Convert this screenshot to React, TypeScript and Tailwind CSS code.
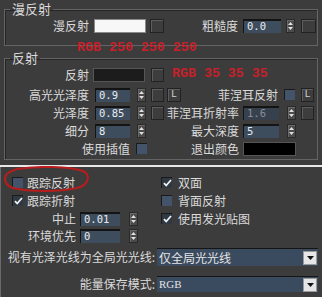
import React from 'react';

const Spinner = () => (
    <div className="w-[9px] h-[14px] bg-[#4b4b4b] border border-[#2a2a2a] shadow-[inset_1px_1px_0_#6a6a6a] flex flex-col items-center justify-center gap-[2px] shrink-0">
        <svg width="5" height="3" viewBox="0 0 5 3"><path d="M2.5 0L5 3H0z" fill="#e0e0e0" /></svg>
        <svg width="5" height="3" viewBox="0 0 5 3"><path d="M0 0h5L2.5 3z" fill="#e0e0e0" /></svg>
    </div>
);

const MapBtn = ({ className = '' }: { className?: string }) => (
    <div className={`h-[14px] border border-[#222] shadow-[inset_1px_1px_0_#5e5e5e] bg-[#3d3d3d] shrink-0 ${className}`} />
);

const LBtn = ({ className = '' }: { className?: string }) => (
    <div className={`h-[14px] border border-[#222] shadow-[inset_1px_1px_0_#5e5e5e] bg-[#3d3d3d] shrink-0 flex items-center justify-center text-[10px] leading-none text-[#d0d0d0] font-['Liberation_Mono',monospace] ${className}`}>
        L
    </div>
);

const Num = ({ v, className = '', disabled = false }: { v: string; className?: string; disabled?: boolean }) => (
    <div
        className={`h-[14px] border-t-2 border-l border-[#141414] pl-[3px] flex items-center text-[10.5px] leading-none font-['DejaVu_Sans_Mono',monospace] shrink-0 ${
            disabled ? 'bg-[#36414d] text-[#8a8f96]' : 'bg-[#3e4d5e] text-[#e8ecf0]'
        } ${className}`}
    >
        {v}
    </div>
);

const Check = ({ on = false }: { on?: boolean }) => (
    <div
        className={`w-[11px] h-[11px] shrink-0 border-t border-l border-[#1a1a1a] flex items-center justify-center ${
            on ? 'bg-[#2e3944]' : 'bg-[#43536a]'
        }`}
    >
        {on && (
            <svg width="9" height="8" viewBox="0 0 9 8">
                <path d="M1 4.2l2.2 2.3L8 1" stroke="#f2f2f2" strokeWidth="1.8" fill="none" />
            </svg>
        )}
    </div>
);

const Label = ({ children, className = '' }: { children: React.ReactNode; className?: string }) => (
    <div className={`text-right text-[12px] leading-[14px] text-[#dadada] whitespace-nowrap shrink-0 ${className}`}>{children}</div>
);

const Dropdown = ({ text, h, serif = false }: { text: string; h: string; serif?: boolean }) => (
    <div className={`flex items-center bg-[#3b4b5f] border-t border-[#151515] w-[161px] ${h}`}>
        <div
            className={`flex-1 pl-[2px] text-[#e4e4e4] whitespace-nowrap ${
                serif ? "font-['Liberation_Serif',serif] text-[11px]" : 'text-[12px]'
            }`}
        >
            {text}
        </div>
        <div className="w-[14px] h-[14px] mr-[1px] bg-[#e6e6e6] border border-[#9a9a9a] flex items-center justify-center">
            <svg width="7" height="4" viewBox="0 0 7 4"><path d="M0 0h7L3.5 4z" fill="#111" /></svg>
        </div>
    </div>
);

export default function App() {
    return (
        <div className="relative w-[322px] h-[297px] bg-[#3c3c3c] overflow-hidden font-['Noto_Sans_CJK_SC','Noto_Sans',sans-serif] text-[#dadada]">
            <div className="h-[165px] px-[4px] pt-[2px]">
                <fieldset className="border border-[#646464] shadow-[inset_1px_1px_0_#262626] pb-[12px]">
                    <legend className="ml-[5px] px-[2px] text-[13px] leading-[14px]">漫反射</legend>
                    <div className="flex items-center h-[15px] mt-[2px]">
                        <Label className="w-[84px]">漫反射</Label>
                        <div className="ml-[5px] w-[52px] h-[14px] bg-[#f7f7f7] border border-[#8a8a8a]" />
                        <MapBtn className="ml-[4px] w-[14px]" />
                        <Label className="w-[74px]">粗糙度</Label>
                        <Num v="0.0" className="ml-[5px] w-[38px]" />
                        <div className="ml-[5px]"><Spinner /></div>
                        <MapBtn className="ml-[6px] w-[15px]" />
                    </div>
                </fieldset>

                <fieldset className="mt-[5px] border border-[#646464] shadow-[inset_1px_1px_0_#262626] pb-[3px]">
                    <legend className="ml-[5px] px-[2px] text-[13px] leading-[14px]">反射</legend>
                    <div className="flex items-center h-[15px] mt-[2px]">
                        <Label className="w-[84px]">反射</Label>
                        <div className="ml-[4px] w-[52px] h-[14px] bg-[#1c1c1c] border border-[#555]" />
                        <MapBtn className="ml-[6px] w-[13px]" />
                    </div>

                    <div className="flex items-center h-[15px] mt-[5px]">
                        <div className="w-[159px] flex items-center">
                            <Label className="w-[84px]">高光光泽度</Label>
                            <Num v="0.9" className="ml-[6px] w-[35px]" />
                            <div className="ml-[7px]"><Spinner /></div>
                            <MapBtn className="ml-[5px] w-[13px]" />
                        </div>
                        <LBtn className="ml-[3px] w-[14px]" />
                        <Label className="w-[97px]">菲涅耳反射</Label>
                        <div className="ml-[6px]"><Check /></div>
                        <LBtn className="ml-[6px] w-[13px]" />
                    </div>

                    <div className="flex items-center h-[15px] mt-[3px]">
                        <div className="w-[159px] flex items-center">
                            <Label className="w-[84px]">光泽度</Label>
                            <Num v="0.85" className="ml-[6px] w-[35px]" />
                            <div className="ml-[7px]"><Spinner /></div>
                            <MapBtn className="ml-[5px] w-[13px]" />
                        </div>
                        <Label className="w-[75px] text-[#7c7c7c]">菲涅耳折射率</Label>
                        <Num v="1.6" disabled className="ml-[4px] w-[36px]" />
                        <div className="ml-[8px]"><Spinner /></div>
                        <MapBtn className="ml-[5px] w-[13px]" />
                    </div>

                    <div className="flex items-center h-[15px] mt-[3px]">
                        <div className="w-[159px] flex items-center">
                            <Label className="w-[84px]">细分</Label>
                            <Num v="8" className="ml-[6px] w-[35px]" />
                            <div className="ml-[7px]"><Spinner /></div>
                        </div>
                        <Label className="w-[75px]">最大深度</Label>
                        <Num v="5" className="ml-[4px] w-[36px]" />
                        <div className="ml-[8px]"><Spinner /></div>
                    </div>

                    <div className="flex items-center h-[15px] mt-[3px]">
                        <div className="w-[159px] flex items-center">
                            <Label className="w-[125px]">使用插值</Label>
                            <div className="ml-[6px]"><Check /></div>
                        </div>
                        <Label className="w-[75px]">退出颜色</Label>
                        <div className="ml-[4px] w-[53px] h-[14px] bg-black border border-[#555]" />
                    </div>
                </fieldset>
            </div>

            <div className="h-[2px] bg-[#e8e8e8]" />

            <div className="border-l border-[#6a6a6a] h-[130px]">
                <div className="grid grid-cols-[160px_1fr] pt-[9px]">
                    <div className="pl-[11px]">
                        <div className="flex items-center gap-[4px] h-[13px]">
                            <Check />
                            <span className="text-[12px] leading-[14px]">跟踪反射</span>
                        </div>
                        <div className="flex items-center gap-[4px] h-[13px] mt-[5px]">
                            <Check on />
                            <span className="text-[12px] leading-[14px]">跟踪折射</span>
                        </div>
                        <div className="flex items-center h-[13px] mt-[5px]">
                            <Label className="w-[64px]">中止</Label>
                            <Num v="0.01" className="ml-[4px] w-[40px]" />
                            <div className="ml-[9px]"><Spinner /></div>
                        </div>
                        <div className="flex items-center h-[13px] mt-[4px]">
                            <Label className="w-[64px]">环境优先</Label>
                            <Num v="0" className="ml-[4px] w-[40px]" />
                            <div className="ml-[9px]"><Spinner /></div>
                        </div>
                    </div>
                    <div>
                        <div className="flex items-center gap-[6px] h-[13px]">
                            <Check on />
                            <span className="text-[12px] leading-[14px]">双面</span>
                        </div>
                        <div className="flex items-center gap-[6px] h-[13px] mt-[5px]">
                            <Check />
                            <span className="text-[12px] leading-[14px]">背面反射</span>
                        </div>
                        <div className="flex items-center gap-[6px] h-[13px] mt-[5px]">
                            <Check on />
                            <span className="text-[12px] leading-[14px]">使用发光贴图</span>
                        </div>
                    </div>
                </div>

                <div className="flex items-center mt-[6px]">
                    <Label className="w-[155px] pr-[1px]">视有光泽光线为全局光光线:</Label>
                    <div className="ml-[1px]"><Dropdown text="仅全局光光线" h="h-[18px]" /></div>
                </div>
                <div className="flex items-center mt-[10px]">
                    <Label className="w-[155px] pr-[1px]">能量保存模式:</Label>
                    <div className="ml-[1px]"><Dropdown text="RGB" h="h-[16px]" serif /></div>
                </div>
            </div>

            {/* annotations drawn over the panel */}
            <div className="absolute left-[77px] top-[41px] text-[13.3px] leading-[14px] font-bold text-[#c8202a] font-['Liberation_Mono',monospace] whitespace-pre">
                RGB 250 250 250
            </div>
            <div className="absolute left-[172px] top-[67px] text-[13.3px] leading-[14px] font-bold text-[#c8202a] font-['Liberation_Mono',monospace] whitespace-pre">
                RGB 35 35 35
            </div>
            <svg className="absolute left-[3px] top-[166px]" width="88" height="27" viewBox="0 0 88 27">
                <path
                    d="M14 3C34 0 66 0 80 5C88 9 86 19 74 22C56 26 26 26 10 22C1 19 0 11 5 7C8 5 11 4 14 3"
                    stroke="#b81c1c"
                    strokeWidth="2"
                    fill="none"
                />
            </svg>
        </div>
    );
}
